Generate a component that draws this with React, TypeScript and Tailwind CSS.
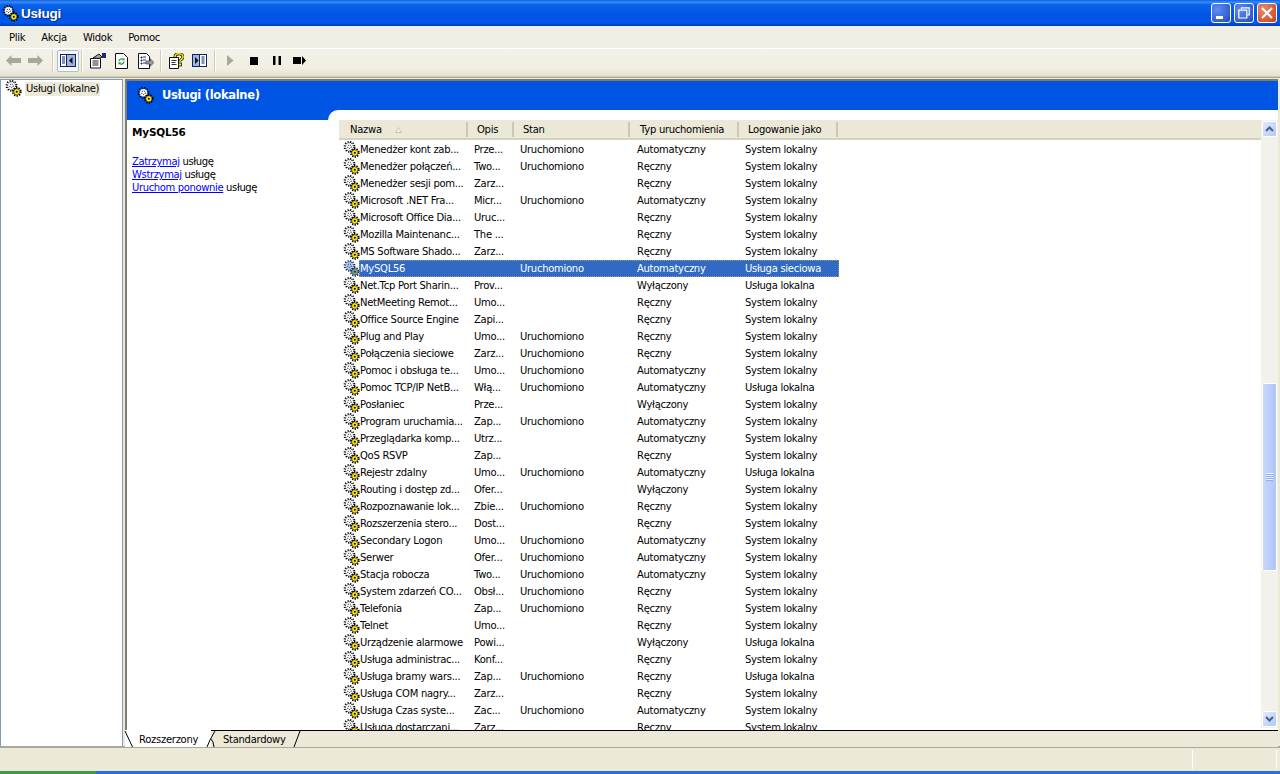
import React from "react";

type Row = [string, string, string, string, string];
const U = "Uruchomiono", A = "Automatyczny", R = "Ręczny", W = "Wyłączony", S = "System lokalny", L = "Usługa lokalna";
const rows: Row[] = [
  ["Menedżer kont zab...", "Prze...", U, A, S],
  ["Menedżer połączeń...", "Two...", U, R, S],
  ["Menedżer sesji pom...", "Zarz...", "", R, S],
  ["Microsoft .NET Fra...", "Micr...", U, A, S],
  ["Microsoft Office Dia...", "Uruc...", "", R, S],
  ["Mozilla Maintenanc...", "The ...", "", R, S],
  ["MS Software Shado...", "Zarz...", "", R, S],
  ["MySQL56", "", U, A, "Usługa sieciowa"],
  ["Net.Tcp Port Sharin...", "Prov...", "", W, L],
  ["NetMeeting Remot...", "Umo...", "", R, S],
  ["Office Source Engine", "Zapi...", "", R, S],
  ["Plug and Play", "Umo...", U, R, S],
  ["Połączenia sieciowe", "Zarz...", U, R, S],
  ["Pomoc i obsługa te...", "Umo...", U, A, S],
  ["Pomoc TCP/IP NetB...", "Włą...", U, A, L],
  ["Posłaniec", "Prze...", "", W, S],
  ["Program uruchamia...", "Zap...", U, A, S],
  ["Przeglądarka komp...", "Utrz...", "", A, S],
  ["QoS RSVP", "Zap...", "", R, S],
  ["Rejestr zdalny", "Umo...", U, A, L],
  ["Routing i dostęp zd...", "Ofer...", "", W, S],
  ["Rozpoznawanie lok...", "Zbie...", U, R, S],
  ["Rozszerzenia stero...", "Dost...", "", R, S],
  ["Secondary Logon", "Umo...", U, A, S],
  ["Serwer", "Ofer...", U, A, S],
  ["Stacja robocza", "Two...", U, A, S],
  ["System zdarzeń CO...", "Obsł...", U, R, S],
  ["Telefonia", "Zap...", U, R, S],
  ["Telnet", "Umo...", "", R, S],
  ["Urządzenie alarmowe", "Powi...", "", W, L],
  ["Usługa administrac...", "Konf...", "", R, S],
  ["Usługa bramy wars...", "Zap...", U, R, L],
  ["Usługa COM nagry...", "Zarz...", "", R, S],
  ["Usługa Czas syste...", "Zac...", U, A, S],
  ["Usługa dostarczani...", "Zarz...", "", R, S],
];

function Gear({ selected = false }: { selected?: boolean }) {
  const big = selected ? "#b4c8ee" : "#ffffff";
  const small = selected ? "#8aa07a" : "#ffe600";
  const ink = selected ? "#10285a" : "#000";
  return (
    <svg width="17" height="17" viewBox="0 0 17 17" className="shrink-0">
      <circle cx="6.500" cy="5.800" r="4.900" fill="none" stroke={ink} strokeWidth="2" strokeDasharray="1.100 1.470" />
      <circle cx="6.500" cy="5.800" r="4" fill={big} />
      <circle cx="6.500" cy="5.800" r="4" fill="none" stroke={ink} strokeWidth="1" strokeDasharray="1 1.500" />
      <circle cx="6.500" cy="5.800" r="1.800" fill="none" stroke={ink} strokeWidth="1" strokeDasharray="1 1" />
      <circle cx="11.800" cy="11.800" r="3.900" fill="none" stroke={ink} strokeWidth="2" strokeDasharray="1.300 1.150" />
      <circle cx="11.800" cy="11.800" r="3.100" fill={small} stroke={ink} strokeWidth="0.500" />
      <circle cx="11.800" cy="11.800" r="1" fill={ink} />
    </svg>
  );
}

function Sep() {
  return <div className="w-px h-[22px] bg-[#d0ccb8] border-r border-white box-content" />;
}

function Tool({ w, children, active = false }: { w: number; children: React.ReactNode; active?: boolean }) {
  return (
    <div
      style={{ width: w }}
      className={
        "h-[22px] flex items-center justify-center shrink-0 " +
        (active ? "bg-[#f8f8f4] border border-[#a9bfdc] rounded-[2px]" : "")
      }
    >
      {children}
    </div>
  );
}

function Toolbar() {
  return (
    <div className="h-[28px] flex items-center pb-[4px] pl-[2px] bg-[linear-gradient(#f4f2e8,#f1efe3_70%,#e5e2d0)] border-b border-[#cfcbb6]">
      <Tool w={22}>
        <svg width="15" height="11" viewBox="0 0 15 11"><path d="M0 5.500 5.500 0v3H15v5H5.500v3z" fill="#a9a799" /></svg>
      </Tool>
      <Tool w={23}>
        <svg width="15" height="11" viewBox="0 0 15 11"><path d="M15 5.500 9.500 0v3H0v5h9.500v3z" fill="#a9a799" /></svg>
      </Tool>
      <div className="w-[5px]" />
      <Sep />
      <div className="w-[3px]" />
      <Tool w={22} active>
        <svg width="16" height="13" viewBox="0 0 16 13">
          <rect x=".5" y=".5" width="15" height="12" fill="#fff" stroke="#0a246a" />
          <path d="M6.500 0v13" stroke="#0a246a" />
          <rect x="7" y="1" width="8" height="11" fill="#a0b4dc" />
          <path d="M12.500 3v7L9 6.500z" fill="#111" />
          <path d="M2 3h3M2 5h3M2 7h3M2 9h3" stroke="#0a246a" />
        </svg>
      </Tool>
      <div className="w-[2px]" />
      <Sep />
      <div className="w-[3px]" />
      <Tool w={23}>
        <svg width="17" height="16" viewBox="0 0 17 16">
          <path d="M1.500 5.500h10v9.500h-10z" fill="#fff" stroke="#111" />
          <path d="M3.500 8h6M3.500 10h6M3.500 12h6" stroke="#222" />
          <path d="M4 5 10 1l3 3-3 1.500z" fill="#a8a89c" stroke="#111" />
          <rect x="13" y="0" width="4" height="5" fill="#1a2a80" />
        </svg>
      </Tool>
      <div className="w-[1px]" />
      <Tool w={23}>
        <svg width="13" height="16" viewBox="0 0 13 16">
          <path d="M.5.5h8l4 4v11H.5z" fill="#fff" stroke="#111" />
          <path d="M4 8a2.800 2.800 0 0 1 4.500-1.500M9 8.500A2.800 2.800 0 0 1 4.500 10.500" fill="none" stroke="#1c9a2a" strokeWidth="1.300" />
          <path d="M9.500 4.800v2.500H7zM3.500 11.800V9.300H6z" fill="#1c9a2a" />
        </svg>
      </Tool>
      <div className="w-[1px]" />
      <Tool w={23}>
        <svg width="16" height="16" viewBox="0 0 16 16">
          <path d="M.5.5h8l3 3v12H.5z" fill="#fff" stroke="#111" />
          <path d="M3 4h1v1H3zM3 7h1v1H3zM3 10h1v1H3zM5 4h3M5 7h3M5 10h3" stroke="#1a2a80" />
          <path d="M8 8h4V5.500L16 9.500l-4 4V11H8z" fill="#9a9a9a" stroke="#333" strokeWidth=".6" />
        </svg>
      </Tool>
      <div className="w-[3px]" />
      <Sep />
      <div className="w-[3px]" />
      <Tool w={23}>
        <svg width="15" height="16" viewBox="0 0 15 16">
          <path d="M.5 4.500h9v11h-9z" fill="#fff" stroke="#111" />
          <path d="M2.500 7.500h5M2.500 9.500h4M2.500 11.500h5" stroke="#333" />
          <path d="M6 4C6 1.500 8 .8 10 .8S14 2 14 4c0 2.200-3 2.500-3 4.500" fill="none" stroke="#111" strokeWidth="3" />
          <path d="M6 4C6 1.500 8 .8 10 .8S14 2 14 4c0 2.200-3 2.500-3 4.500" fill="none" stroke="#ffe600" strokeWidth="1.600" />
          <rect x="9.500" y="10" width="3" height="3" fill="#ffe600" stroke="#111" strokeWidth=".8" />
        </svg>
      </Tool>
      <Tool w={23}>
        <svg width="15" height="13" viewBox="0 0 15 13">
          <rect x=".5" y=".5" width="14" height="12" fill="#fff" stroke="#0a246a" />
          <rect x="1" y="1" width="6" height="11" fill="#a0b4dc" />
          <path d="M7.500 0v13" stroke="#0a246a" />
          <path d="M3 3v7l3.500-3.500z" fill="#111" />
          <path d="M9.500 3h3M9.500 5h3M9.500 7h3M9.500 9h3" stroke="#0a246a" />
        </svg>
      </Tool>
      <div className="w-[3px]" />
      <Sep />
      <div className="w-[3px]" />
      <Tool w={23}>
        <svg width="7" height="11" viewBox="0 0 7 11"><path d="M0 0l6.500 5.500L0 11z" fill="#a9a799" /></svg>
      </Tool>
      <Tool w={23}>
        <svg width="8" height="8" viewBox="0 0 8 8"><rect width="8" height="8" fill="#000" /></svg>
      </Tool>
      <Tool w={23}>
        <svg width="8" height="9" viewBox="0 0 8 9"><path d="M0 0h2.500v9H0zM5.500 0H8v9H5.500z" fill="#000" /></svg>
      </Tool>
      <Tool w={23}>
        <svg width="13" height="9" viewBox="0 0 13 9"><path d="M0 1h8v7H0zM9 0l4 4.500L9 9z" fill="#000" /></svg>
      </Tool>
    </div>
  );
}

function ScrollBtn({ up }: { up: boolean }) {
  return (
    <div className="h-[16px] w-[15px] shrink-0 mx-auto rounded-[2px] border border-white bg-[linear-gradient(135deg,#e1eafe,#aec8f7)] flex items-center justify-center">
      <svg width="9" height="6" viewBox="0 0 9 6">
        <path d={up ? "M1 5l3.500-3.500L8 5" : "M1 1l3.500 3.500L8 1"} fill="none" stroke="#4d6185" strokeWidth="2" />
      </svg>
    </div>
  );
}

function Scrollbar() {
  return (
    <div className="w-[17px] shrink-0 bg-[#f3f1ec] flex flex-col h-[608px] pt-[1px] pb-[1px]">
      <ScrollBtn up />
      <div className="h-[246px] shrink-0" />
      <div className="h-[188px] shrink-0 w-[15px] mx-auto rounded-[2px] border border-white bg-[linear-gradient(90deg,#c9d8fb,#b9cdf9_55%,#aec6f6)] flex items-center justify-center">
        <svg width="7" height="8" viewBox="0 0 7 8">
          <path d="M0 .5h7M0 2.500h7M0 4.500h7M0 6.500h7" stroke="#eef3ff" />
          <path d="M0 1.500h7M0 3.500h7M0 5.500h7M0 7.500h7" stroke="#8cadf0" />
        </svg>
      </div>
      <div className="flex-1" />
      <ScrollBtn up={false} />
    </div>
  );
}

function Header() {
  const cols: [string, string, string][] = [
    ["Nazwa", "w-[129px] pl-[11px]", "n"],
    ["Opis", "w-[46px] pl-[9px]", ""],
    ["Stan", "w-[116px] pl-[9px]", ""],
    ["Typ uruchomienia", "w-[109px] pl-[10px]", ""],
    ["Logowanie jako", "w-[99px] pl-[9px]", ""],
  ];
  return (
    <div className="h-[20px] shrink-0 flex bg-[#ebe8d8] border-b-2 border-[#d6d2c0] items-center pt-px">
      {cols.map(([t, c, n]) => (
        <div key={t} className={c + " h-[15px] flex items-center border-r-2 border-[#cbc7b3] box-border shrink-0 gap-[13px]"}>
          <span>{t}</span>
          {n && (
            <svg width="7" height="6" viewBox="0 0 7 6"><path d="M3.500.5 6.500 5.500h-6z" fill="#f4f3ea" stroke="#c7c4b2" /></svg>
          )}
        </div>
      ))}
    </div>
  );
}

function ListRow({ r }: { r: Row }) {
  const sel = r[0] === "MySQL56";
  return (
    <div className="h-[17px] flex items-center pl-[4px] shrink-0">
      <Gear selected={sel} />
      <div
        className={
          "flex items-center h-[17px] w-[480px] -ml-px " +
          (sel ? "bg-[#316ac5] text-white outline-1 -outline-offset-1 outline-dotted outline-[#9c9a70]" : "")
        }
      >
        <div className="w-[115px] pl-px whitespace-nowrap overflow-hidden">{r[0]}</div>
        <div className="w-[46px] whitespace-nowrap">{r[1]}</div>
        <div className="w-[117px] whitespace-nowrap">{r[2]}</div>
        <div className="w-[108px] whitespace-nowrap">{r[3]}</div>
        <div className="whitespace-nowrap">{r[4]}</div>
      </div>
    </div>
  );
}

function Tabs() {
  return (
    <div className="h-[17px] flex bg-[#ece9d8] relative shrink-0 border-t border-black">
      <div className="w-[86px] h-[17px] -mt-px bg-white pl-[14px] pt-[3px] relative z-10 shrink-0">
        Rozszerzony
        <svg width="90" height="17" viewBox="0 0 90 17" className="absolute left-0 top-0 overflow-visible">
          <path d="M0 1 7.500 17M90 1l-5 9-3 7" stroke="#000" fill="none" />
        </svg>
      </div>
      <div className="w-[92px] h-[16px] pl-[12px] pt-[2px] relative shrink-0">
        Standardowy
        <svg width="94" height="16" viewBox="0 0 94 16" className="absolute left-0 top-0 overflow-visible">
          <path d="M0 8l2 3 1 5M89 0l-6 16" stroke="#000" fill="none" />
        </svg>
      </div>
    </div>
  );
}

export default function App() {
  return (
    <div className="w-[1280px] h-[774px] overflow-hidden flex flex-col bg-[#ece9d8] text-black text-[10px] leading-[13px] font-['DejaVu_Sans',sans-serif] tracking-[-0.28px]">
      {/* Title bar */}
      <div className="h-[26px] shrink-0 flex items-center pl-[2px] pr-[2px] bg-[linear-gradient(#0a5fe6,#3a8cf7_8%,#0a62ea_18%,#0054e3_60%,#0058ee_85%,#003fc0)]">
        <Gear />
        <span className="ml-[2px] text-white font-bold text-[13.5px] tracking-[-0.2px] font-['Liberation_Sans',sans-serif] [text-shadow:1px_1px_1px_#0a2a80]">
          Usługi
        </span>
        <div className="flex-1" />
        <div className="flex gap-[3px] mr-[1px]">
          <div className="w-[20px] h-[20px] rounded-[3px] border border-white bg-[radial-gradient(circle_at_30%_30%,#5f8ef0,#2248c8)] flex items-end pl-[4px] pb-[3px]">
            <div className="w-[7px] h-[3px] bg-white" />
          </div>
          <div className="w-[20px] h-[20px] rounded-[3px] border border-white bg-[radial-gradient(circle_at_30%_30%,#5f8ef0,#2248c8)] flex items-center justify-center">
            <svg width="12" height="12" viewBox="0 0 12 12">
              <path d="M3.500 2V.800h7.700V8H9M.800 3.200h8V11H.800z" fill="none" stroke="#fff" strokeWidth="1.200" />
            </svg>
          </div>
          <div className="w-[20px] h-[20px] rounded-[3px] border border-white bg-[radial-gradient(circle_at_30%_30%,#ec8a6c,#c8401c)] flex items-center justify-center">
            <svg width="12" height="12" viewBox="0 0 12 12">
              <path d="M1 1l10 10M11 1 1 11" stroke="#fff" strokeWidth="2" />
            </svg>
          </div>
        </div>
      </div>
      {/* Menu */}
      <div className="h-[23px] shrink-0 flex items-center bg-[#f1efe3] border-b border-white pl-[9px] gap-[16px]">
        <span>Plik</span>
        <span>Akcja</span>
        <span>Widok</span>
        <span>Pomoc</span>
      </div>
      <Toolbar />
      <div className="h-px bg-[#aca899] shrink-0" />
      {/* Main */}
      <div className="flex-1 min-h-0 flex pt-px">
        <div className="w-[123px] shrink-0 h-[668px] bg-white border border-[#7f9db9] pl-[4px]">
          <div className="flex items-center h-[17px]">
            <Gear />
            <span className="ml-[3px] px-[1px] bg-[#ece9d8] h-[14px] flex items-center">Usługi (lokalne)</span>
          </div>
        </div>
        <div className="w-[2px] shrink-0" />
        <div className="flex-1 min-w-0 flex flex-col mr-[2px] h-[668px]">
          <div className="h-[651px] shrink-0 flex flex-col bg-white border-l-2 border-t-2 border-[#807d70] overflow-hidden">
            <div className="h-[39px] shrink-0 bg-[#0054e3] flex items-center pl-[10px] pb-[10px] relative">
              <Gear />
              <span className="ml-[8px] text-white font-bold text-[11.5px] tracking-[-0.3px]">Usługi (lokalne)</span>
              <div className="absolute left-[201px] right-0 bottom-0 h-[10px] bg-white rounded-tl-[10px]" />
            </div>
            <div className="flex-1 min-h-0 flex">
              <div className="w-[212px] shrink-0 pl-[5px] pt-[5px]">
                <div className="font-bold text-[10.5px] leading-[14px] tracking-[-0.2px]">MySQL56</div>
                <div className="mt-[16px] leading-[13px] tracking-[-0.36px]">
                  <div><a className="text-[#0000ff] underline">Zatrzymaj</a> usługę</div>
                  <div><a className="text-[#0000ff] underline">Wstrzymaj</a> usługę</div>
                  <div><a className="text-[#0000ff] underline">Uruchom ponownie</a> usługę</div>
                </div>
              </div>
              <div className="flex-1 min-w-0 flex flex-col">
                <Header />
                <div className="flex-1 min-h-0 overflow-hidden flex flex-col pt-px">
                  {rows.map((r) => (
                    <ListRow key={r[0]} r={r} />
                  ))}
                </div>
              </div>
              <Scrollbar />
            </div>
          </div>
          <Tabs />
        </div>
      </div>
      {/* Status */}
      <div className="h-[25px] shrink-0 border-t-2 border-[#aca899] bg-[#ece9d8] flex justify-end items-center pr-[2px]">
        <div className="w-[85px] h-[19px] border-l border-r border-white mr-[1px]" />
      </div>
      <div className="h-[3px] shrink-0 flex bg-[#2a6fe0]">
        <div className="w-[96px] bg-[#3f9a45]" />
      </div>
    </div>
  );
}
